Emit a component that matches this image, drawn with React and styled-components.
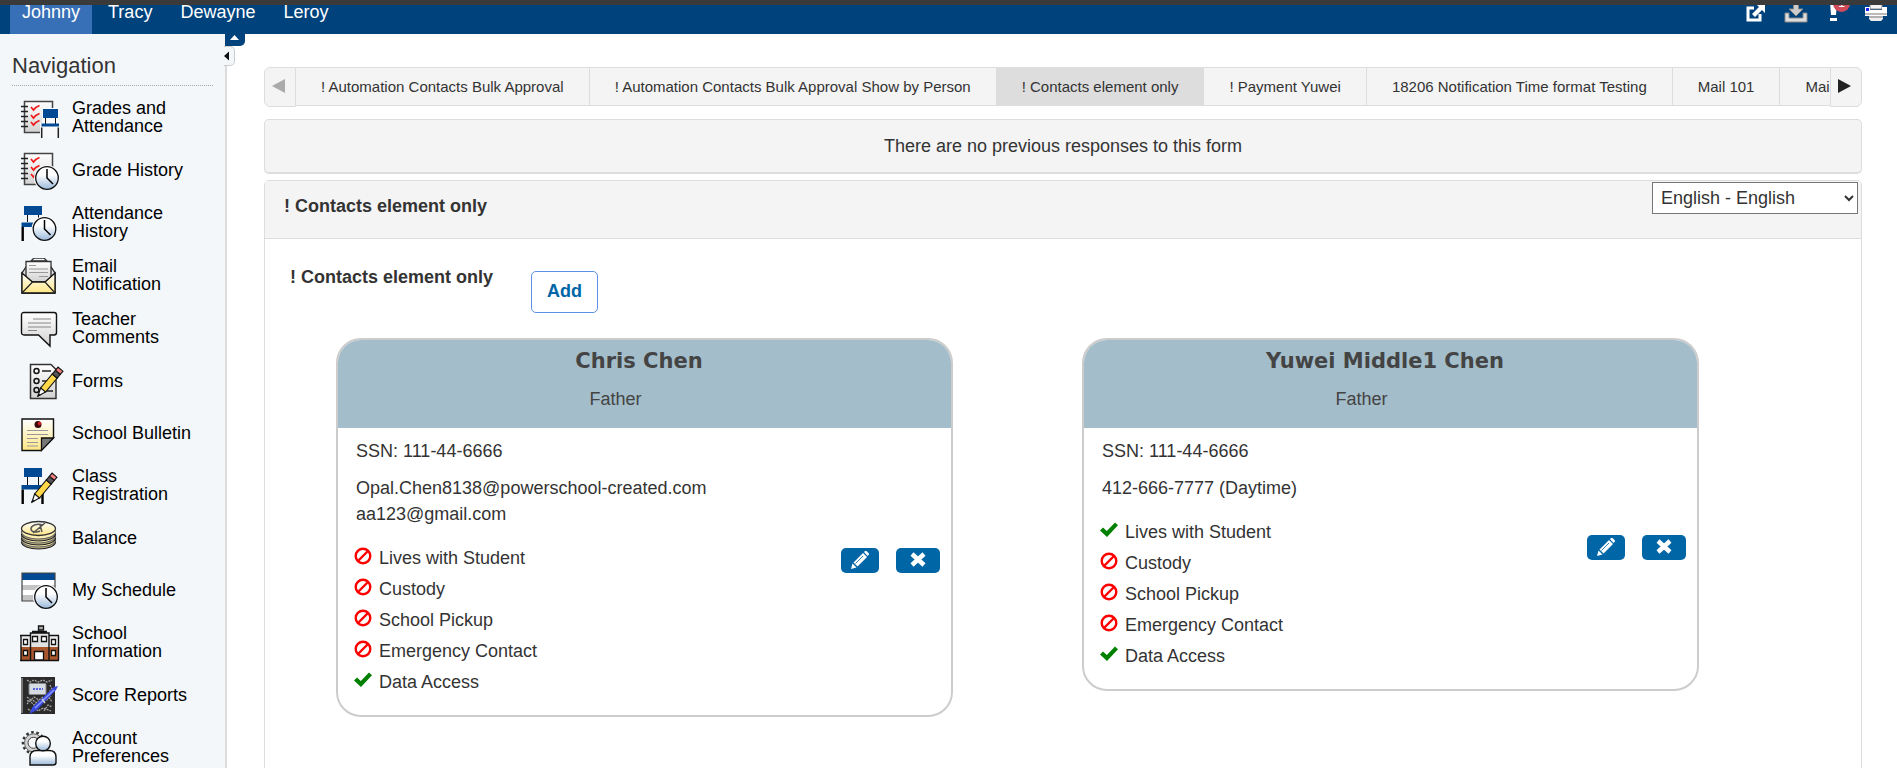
import React from "react";
import styled, { createGlobalStyle } from "styled-components";

const GlobalStyle = createGlobalStyle`
  * {
    box-sizing: border-box;
  }

  body {
    margin: 0;
    background: #fff;
    color: #333;
    font-family: "Liberation Sans", Arial, sans-serif;
    font-size: 18px;
    line-height: 20px;
  }

  button,
  select {
    font: inherit;
    cursor: pointer;
  }

  svg {
    display: block;
    flex: none;
  }
`;

const Page = styled.div`
  display: flex;
  flex-direction: column;
  height: 100vh;
  overflow: hidden;
`;

const TopBar = styled.header`
  display: flex;
  flex: none;
  justify-content: space-between;
  padding: 0 9px 0 10px;
  overflow: hidden;
  border-top: 5px solid #3a3a3a;
  background: #00427c;
`;

const StudentTabs = styled.nav`
  display: flex;
  gap: 4px;
`;

const StudentTab = styled.a`
  padding: 0 12px 15px;
  line-height: 14px;
  color: #fff;
  text-decoration: none;
  background: ${props => (props.$active ? "#3870b8" : "transparent")};
`;

const Tools = styled.div`
  display: flex;
  align-items: flex-start;
  gap: 16px;
`;

const ToolButton = styled.button`
  position: relative;
  padding: 0;
  border: 0;
  background: none;
`;

const AlertCount = styled.span`
  position: absolute;
  top: -10px;
  left: 9px;
  width: 17px;
  height: 17px;
  border-radius: 50%;
  background: #d04a58;
  color: #fff;
  font-size: 12px;
  line-height: 17px;
  text-align: center;
`;

const Columns = styled.div`
  display: flex;
  flex: 1;
  min-height: 0;
`;

const Sidebar = styled.aside`
  position: relative;
  flex: none;
  width: 227px;
  padding: 20px 12px 0;
  border-right: 2px solid #dcdcdc;
  background: #f3f7fa;
`;

const SidebarTitle = styled.h2`
  margin: 0;
  padding-bottom: 7px;
  border-bottom: 1px dotted #a5a9ac;
  font-size: 22px;
  font-weight: normal;
  line-height: 24px;
`;

const NavList = styled.ul`
  margin: 6px 0 0;
  padding: 0;
  list-style: none;
`;

const NavLink = styled.a`
  display: flex;
  align-items: center;
  gap: 8px;
  padding: 7px 10px 7px 8px;
  color: #000;
  line-height: 18px;
  text-decoration: none;
`;

const NavText = styled.span`
  padding-bottom: 3px;
`;

const HideHeader = styled.button`
  position: absolute;
  top: 0;
  left: 225px;
  width: 20px;
  height: 12px;
  padding: 0;
  border: 0;
  border-radius: 0 0 5px 0;
  background: #00427c;
`;

const HideSidebar = styled.button`
  position: absolute;
  top: 12px;
  left: 224px;
  width: 11px;
  height: 20px;
  padding: 0;
  border: 1px solid #ccc;
  border-left: 0;
  border-radius: 0 5px 5px 0;
  background: #f3f7fa;
`;

const Main = styled.main`
  display: flex;
  flex: 1;
  flex-direction: column;
  min-width: 0;
  padding: 33px 35px 0 37px;
`;

const FormTabs = styled.div`
  display: flex;
  flex: none;
  align-items: flex-start;
`;

const TabStrip = styled.nav`
  display: flex;
  flex: 1;
  min-width: 0;
  overflow: hidden;
  border: solid #ddd;
  border-width: 1px 0;
  background: #f4f4f4;
`;

const FormTab = styled.a`
  flex: none;
  padding: 0 25px;
  border-right: 1px solid #ddd;
  background: ${props => (props.$active ? "#ddd" : "#f4f4f4")};
  color: #333;
  font-size: 15px;
  line-height: 37px;
  text-decoration: none;
`;

const ScrollButton = styled.button`
  display: flex;
  flex: none;
  align-items: center;
  justify-content: center;
  width: 32px;
  height: 40px;
  padding: 0 4px 2px 0;
  border: 1px solid #ddd;
  border-radius: ${props => (props.$right ? "0 6px 6px 0" : "6px 0 0 6px")};
  background: #f4f4f4;
  color: ${props => (props.disabled ? "#aaa" : "#222")};
`;

const Notice = styled.p`
  flex: none;
  margin: 12px 0 6px;
  padding: 16px 0;
  border: 1px solid #ddd;
  border-bottom-width: 2px;
  border-radius: 5px;
  background: #f4f4f4;
  text-align: center;
`;

const Panel = styled.section`
  flex: 1;
  border: 1px solid #ddd;
  border-bottom: 0;
  border-radius: 5px 5px 0 0;
`;

const PanelHead = styled.div`
  display: flex;
  align-items: flex-start;
  justify-content: space-between;
  padding: 1px 3px 0 19px;
  border-bottom: 1px solid #ddd;
  background: #f4f4f4;
`;

const PanelTitle = styled.h1`
  margin: 0;
  padding: 14px 0 22px;
  font-size: 18px;
  line-height: 20px;
`;

const LanguageSelect = styled.select`
  width: 206px;
  height: 32px;
  padding: 0 4px;
  border: 1px solid #767676;
  border-radius: 0;
  background-color: #fff;
  color: #333;
`;

const ElementRow = styled.div`
  display: flex;
  align-items: flex-start;
  padding: 28px 25px 25px;
`;

const ElementTitle = styled.h2`
  width: 241px;
  margin: 0;
  font-size: 18px;
  line-height: 20px;
`;

const AddButton = styled.button`
  margin-top: 4px;
  padding: 9px 15px 11px;
  border: 1px solid #5c8fe6;
  border-radius: 5px;
  background: #fff;
  color: #0066a6;
  font-weight: bold;
`;

const CardGrid = styled.div`
  display: grid;
  grid-template-columns: 1fr 1fr;
  align-items: start;
  gap: 129px;
  padding: 0 162px 0 71px;
`;

const Card = styled.article`
  overflow: hidden;
  border: 2px solid #ccc;
  border-radius: 25px;
`;

const CardHead = styled.header`
  padding: 9px 0 19px;
  background: #a3bdca;
  color: #444;
  text-align: center;
`;

const ContactName = styled.h3`
  margin: 0 11px 16px 0;
  font-family: "DejaVu Sans", Verdana, sans-serif;
  font-size: 21px;
  font-weight: bold;
  line-height: 24px;
`;

const Relation = styled.div`
  margin-right: 58px;
`;

const CardBody = styled.div`
  display: flex;
  align-items: center;
  justify-content: space-between;
  padding: 10px 11px 17px 18px;
`;

const Detail = styled.div`
  margin-bottom: 11px;
  line-height: 26px;
`;

const FlagList = styled.ul`
  margin: 16px 0 0;
  padding: 0;
  list-style: none;
`;

const Flag = styled.li`
  display: flex;
  align-items: center;
  gap: 7px;
  line-height: 31px;

  svg {
    margin: 0 0 6px -2px;
  }
`;

const Actions = styled.div`
  display: flex;
  gap: 17px;
  padding-bottom: 16px;
`;

const ActionButton = styled.button`
  display: flex;
  align-items: center;
  justify-content: center;
  height: 25px;
  padding: 0 ${props => (props.$wide ? 13 : 10)}px;
  border: 0;
  border-radius: 5px;
  background: #0066a6;
`;

const Svg = ({ w = 44, h = 38, children }) => (
  <svg width={w} height={h} viewBox={`0 0 ${w} ${h}`} fill="none" aria-hidden="true">
    {children}
  </svg>
);

const Triangle = ({ direction }) => {
  const paths = {
    left: "M13 0v14L0 7z",
    right: "M0 0v14l13-7z"
  };
  return (
    <Svg w={13} h={14}>
      <path d={paths[direction]} fill="currentColor" />
    </Svg>
  );
};

// Shared gradients for the navigation icons
const GradientDefs = styled.svg`
  position: absolute;
`;

const Gradients = () => (
  <GradientDefs width="0" height="0" aria-hidden="true">
    <defs>
      <linearGradient id="steel" x1="0" y1="0" x2="0" y2="1">
        <stop offset="0.35" stopColor="#fff" />
        <stop offset="1" stopColor="#9bbadb" />
      </linearGradient>
      <linearGradient id="paper" x1="0" y1="0" x2="0" y2="1">
        <stop offset="0" stopColor="#fff" />
        <stop offset="1" stopColor="#d2d2d2" />
      </linearGradient>
      <linearGradient id="cream" x1="0" y1="0" x2="0" y2="1">
        <stop offset="0" stopColor="#fff" />
        <stop offset="1" stopColor="#ffe684" />
      </linearGradient>
    </defs>
  </GradientDefs>
);

const Clock = ({ x, y }) => (
  <g>
    <circle cx={x} cy={y} r="13" fill="#f8fafc" />
    <circle cx={x} cy={y} r="11.3" fill="url(#steel)" stroke="#111" strokeWidth="1.3" />
    <path d={`M${x} ${y - 9}V${y}l6 6`} stroke="#000" strokeWidth="1.5" />
  </g>
);

const Notebook = () => (
  <g>
    <path d="M4.5 1.5h28v31h-28z" fill="url(#paper)" stroke="#444" strokeWidth="1.5" />
    <path d="M1 6.5h7M1 11.5h7M1 16.5h7M1 21.5h7M1 26.5h7" stroke="#222" strokeWidth="1.4" />
    <path
      d="M11 7l2.5 3q2-3 6-4.5M11 15l2.5 3q2-3 6-4.5M11 22l2.5 3q2-3 6-4.5"
      stroke="#f01818"
      strokeWidth="1.7"
    />
  </g>
);

const Pencil = ({ tipX, tipY }) => (
  <g transform={`translate(${tipX} ${tipY}) rotate(40)`} stroke="#111" strokeWidth="1.1">
    <path d="M0 0l-3.2-8h6.4z" fill="#fff" />
    <path d="M-3.2-8h6.4v-18h-6.4z" fill="#ffd84a" />
    <path d="M-3.2-26h6.4v-5h-6.4z" fill="#555" />
    <path d="M-3.2-31h6.4v-4h-6.4z" fill="#f28080" />
    <path d="M-.8-1.8L0 0l.8-1.8z" fill="#000" />
  </g>
);

const GradesIcon = () => (
  <Svg>
    <Notebook />
    <path d="M22 8h17v31H20V23h2z" fill="#f7f9fb" />
    <path d="M25.5 18v6M35.5 18v6" stroke="#111" />
    <path d="M23 9h15v9H23zM21.5 23.5H39v3H21.5z" fill="#014a93" />
    <path d="M21.7 38V27.5M38.3 38V27.5" stroke="#222" strokeWidth="1.5" />
  </Svg>
);

const GradeHistoryIcon = () => (
  <Svg>
    <Notebook />
    <Clock x={27} y={26} />
  </Svg>
);

const AttendanceIcon = () => (
  <Svg>
    <path d="M7.5 9v8M18.5 9v8" stroke="#111" />
    <path d="M4 1h18v9H4zM1.5 17.5h14V22h-14z" fill="#014a93" />
    <path d="M2.7 36V22" stroke="#000" strokeWidth="2.4" />
    <Clock x={24.5} y={24} />
  </Svg>
);

const EmailIcon = () => (
  <Svg>
    <path d="M6 9L2 15v20h33V15l-4-6z" fill="#ddd" stroke="#222" strokeWidth="1.3" />
    <path d="M11 3l3-3h10l3 3z" fill="#f4f4f4" stroke="#333" strokeWidth="1.3" />
    <path d="M6 3.5h25V24H6z" fill="url(#paper)" stroke="#333" strokeWidth="1.3" />
    <path d="M9 7.5h7M9 11h19M9 14.5h19M19 18.5h9" stroke="#999" />
    <path d="M2 15l10.5 9H25l10-9v20H2z" fill="url(#cream)" stroke="#111" strokeWidth="1.3" />
    <path d="M12.5 24L2 35M25 24l10 11" stroke="#222" strokeWidth="1.2" />
  </Svg>
);

const CommentIcon = () => (
  <Svg>
    <path
      d="M4 1.5h30q2.5 0 2.5 2.5v17.5q0 2.5-2.5 2.5h-4v11L18.5 24H4q-2.5 0-2.5-2.5V4Q1.5 1.5 4 1.5z"
      fill="url(#paper)"
      stroke="#111"
      strokeWidth="1.4"
    />
    <path d="M13 8h18M8 12h23M8 16h23M8 19.5h9" stroke="#888" />
  </Svg>
);

const FormsIcon = () => (
  <Svg>
    <path d="M10.5 1.5H31l5 5v29H10.5z" fill="url(#paper)" stroke="#333" strokeWidth="1.5" />
    <circle cx="16.5" cy="8" r="2.5" stroke="#111" strokeWidth="1.5" />
    <circle cx="16.5" cy="18" r="2.5" stroke="#111" strokeWidth="1.5" />
    <circle cx="16.5" cy="27" r="2.5" stroke="#111" strokeWidth="1.5" />
    <path d="M22 8h9M22 18h9M22 28h11" stroke="#222" strokeWidth="1.5" />
    <Pencil tipX={18} tipY={33} />
  </Svg>
);

const BulletinIcon = () => (
  <Svg>
    <path d="M2 4h31.5v19L21 35.5H2z" fill="url(#cream)" stroke="#111" strokeWidth="1.4" />
    <path d="M21.5 35.5V23h12z" fill="#777" stroke="#111" strokeWidth="1.3" />
    <path d="M7 15.5h21M7 19.5h21M7 23.5h11M7 27.5h11M7 31h11" stroke="#999" />
    <circle cx="18" cy="9.5" r="3.5" fill="#3a0808" />
    <circle cx="19.5" cy="8.5" r="1.7" fill="#d82020" />
  </Svg>
);

const RegistrationIcon = () => (
  <Svg>
    <path d="M7.5 9v8M18.5 9v8" stroke="#111" />
    <path d="M4 0h18v9H4zM1.5 17H22v4.5H1.5z" fill="#014a93" />
    <path d="M2.7 36V21.5M22.5 36V21.5" stroke="#000" strokeWidth="2.4" />
    <Pencil tipX={12} tipY={34} />
  </Svg>
);

const BalanceIcon = () => (
  <Svg>
    {[22, 18, 14].map(y => (
      <g key={y} strokeWidth="1.2">
        <ellipse cx="18.5" cy={y} rx="17" ry="7" fill="#b9ad7c" stroke="#222" />
        <ellipse cx="18.5" cy={y - 2} rx="17" ry="7" fill="#fbeeb0" stroke="#666" />
      </g>
    ))}
    <ellipse cx="18.5" cy="8.5" rx="17" ry="7" fill="url(#cream)" stroke="#333" strokeWidth="1.3" />
    <path
      d="M23 5.5c-5-3-12 0-12 3.5 0 3 5 4 9 2M25 3L13 13M20 5l2 7"
      stroke="#555"
      strokeWidth="1.5"
    />
  </Svg>
);

const ScheduleIcon = () => (
  <Svg>
    <path d="M2 1h33v28H2z" fill="#fff" />
    <path d="M2 13h33v5H2zM2 23h33v6H2z" fill="#c4c4c4" />
    <path d="M2 1h33v7H2z" fill="#014a93" />
    <path d="M2 1h33v28H2z" stroke="#444" strokeWidth="1.2" />
    <Clock x={26} y={25} />
  </Svg>
);

const SchoolIcon = () => (
  <Svg>
    <path d="M18.5 8V1h5v4h-5" fill="#aaa" stroke="#111" strokeWidth="1.3" />
    <path d="M1 10.5h9.5V35H1zM29 10.5h9.5V35H29z" fill="#eee" />
    <path d="M10.5 8H29v27H10.5z" fill="#e2e2e2" />
    <path d="M1 22h37.5v13H1z" fill="#a8562c" />
    <path
      d="M1 35V10.5h9.5M0 10.5h10M29 10.5h10M38.5 10.5V35M10.5 35V8H29v27M12 6.5h15M0 35.5h39"
      stroke="#111"
      strokeWidth="1.4"
    />
    <path
      d="M3.5 14.5h4v5h-4zM31.5 14.5h4v5h-4zM3.5 25.5h4v5h-4zM31.5 25.5h4v5h-4zM12.5 11.5h5v5h-5zM21.5 11.5h5v5h-5zM14.5 26.5h9V35h-9z"
      fill="#fff"
      stroke="#111"
      strokeWidth="1.3"
    />
  </Svg>
);

const ScoreIcon = () => (
  <Svg>
    <path d="M1 0h34v37H1z" fill="#2b2b2b" />
    <path
      d="M7 3l3 2 4-2 4 2 5-2 4 2 5-2M7 20l4 3 3-3 5 3 4-3 4 3 4-4M7 27l3-3 4 4 4-4 4 3M8 32l3 2 3-4 4 4 5-3 8 3M30 8l2 4-3 3M7 24l5-1 4 2M24 34l4-6 4 2M29 20l3 5"
      stroke="#a5a5a5"
      strokeWidth="1.3"
      strokeDasharray="2 1"
    />
    <path d="M2 1v35" stroke="#777" strokeWidth="2" />
    <rect x="9" y="6.5" width="17" height="11" rx="1" fill="#d5dce2" stroke="#888" />
    <path d="M13 12h10" stroke="#5b66dd" strokeWidth="2" strokeDasharray="2 1" />
    <path d="M9.5 37l3-7L34 10l4-1-2 4-19 20z" fill="#3849e0" />
    <path d="M15 31l19-18" stroke="#8d98ff" strokeWidth="1.5" />
    <path d="M22 22l3 4" stroke="#ccc" strokeWidth="1.5" />
  </Svg>
);

const AccountIcon = () => (
  <Svg>
    <circle
      cx="13.5"
      cy="12.8"
      r="10.5"
      stroke="#333"
      strokeWidth="2.6"
      strokeDasharray="2.6 2.6"
    />
    <circle cx="13.5" cy="12.8" r="9" fill="#d2d2d2" stroke="#666" />
    <circle cx="13.5" cy="12.8" r="5.5" fill="#f3f7fa" stroke="#444" />
    <path
      d="M10 35v-8q0-6.5 7-6.5h12q7 0 7 6.5v5.5q0 2.5-3 2.5z"
      fill="url(#steel)"
      stroke="#111"
      strokeWidth="1.4"
    />
    <circle cx="23" cy="13.5" r="7.3" fill="url(#steel)" stroke="#111" strokeWidth="1.4" />
  </Svg>
);

const NoIcon = () => (
  <Svg w={18} h={18}>
    <circle cx="9" cy="9" r="7.3" stroke="red" strokeWidth="2.4" />
    <path d="M4 14L14 4" stroke="red" strokeWidth="2.4" />
  </Svg>
);

const YesIcon = () => (
  <Svg w={18} h={18}>
    <path d="M0 9.5l3-3L6.8 10 15 1.5l3 2.8L7 16z" fill="green" />
  </Svg>
);

const EditIcon = () => (
  <Svg w={18} h={18}>
    <path
      d="M0 18l1.5-5.5 4 4zM2.5 11.5L12 2l4 4-9.5 9.5zM13 1l1-1q1-.5 2 .5L17.5 2q1 1 0 2l-1 1z"
      fill="#fff"
    />
    <path d="M4.5 12.5L12 5" stroke="#0066a6" strokeWidth=".8" />
  </Svg>
);

const DeleteIcon = () => (
  <Svg w={18} h={18}>
    <path d="M3 3l12 11M15 3L3 14" stroke="#fff" strokeWidth="4.5" />
  </Svg>
);

const navItems = [
  { label: "Grades and Attendance", Icon: GradesIcon },
  { label: "Grade History", Icon: GradeHistoryIcon },
  { label: "Attendance History", Icon: AttendanceIcon },
  { label: "Email Notification", Icon: EmailIcon },
  { label: "Teacher Comments", Icon: CommentIcon },
  { label: "Forms", Icon: FormsIcon },
  { label: "School Bulletin", Icon: BulletinIcon },
  { label: "Class Registration", Icon: RegistrationIcon },
  { label: "Balance", Icon: BalanceIcon },
  { label: "My Schedule", Icon: ScheduleIcon },
  { label: "School Information", Icon: SchoolIcon },
  { label: "Score Reports", Icon: ScoreIcon },
  { label: "Account Preferences", Icon: AccountIcon }
];

const students = ["Johnny", "Tracy", "Dewayne", "Leroy"];

const forms = [
  "! Automation Contacts Bulk Approval",
  "! Automation Contacts Bulk Approval Show by Person",
  "! Contacts element only",
  "! Payment Yuwei",
  "18206 Notification Time format Testing",
  "Mail 101",
  "Mail"
];

const flagNames = [
  "Lives with Student",
  "Custody",
  "School Pickup",
  "Emergency Contact",
  "Data Access"
];

const contacts = [
  {
    name: "Chris Chen",
    relation: "Father",
    ssn: "111-44-6666",
    reach: ["Opal.Chen8138@powerschool-created.com", "aa123@gmail.com"],
    granted: ["Data Access"]
  },
  {
    name: "Yuwei Middle1 Chen",
    relation: "Father",
    ssn: "111-44-6666",
    reach: ["412-666-7777 (Daytime)"],
    granted: ["Lives with Student", "Data Access"]
  }
];

function Header() {
  return (
    <TopBar>
      <StudentTabs>
        {students.map(name => (
          <StudentTab key={name} href="#" $active={name === "Johnny"}>
            {name}
          </StudentTab>
        ))}
      </StudentTabs>
      <Tools>
        <ToolButton aria-label="Open in new window">
          <Svg w={22} h={18}>
            <path d="M8 3H2v12h12V9" stroke="#fff" strokeWidth="3" />
            <path d="M10-1h9v9l-3-3-7 7-3-3 7-7z" fill="#fff" />
          </Svg>
        </ToolButton>
        <ToolButton aria-label="Download">
          <Svg w={24} h={18}>
            <path d="M1 8h4v5h14V8h4v9H1z" fill="#ddd" stroke="#888" />
            <path d="M9.5-2h5v6H19l-7 7-7-7h4.5z" fill="#ccc" stroke="#888" />
          </Svg>
        </ToolButton>
        <ToolButton aria-label="Alerts">
          <Svg w={24} h={18}>
            <path d="M6-3h7l-1 13H7zM6 13h7v3H6z" fill="#fff" />
          </Svg>
          <AlertCount>1</AlertCount>
        </ToolButton>
        <ToolButton aria-label="Print">
          <Svg w={24} h={18}>
            <path d="M6-2h12v6H6z" fill="#f4f4f4" stroke="#888" />
            <path d="M1 2h5v3h12V2h5v9H1z" fill="#fff" />
            <path d="M1 9h22" stroke="#777" />
            <path d="M5 11h14v3l-2 2H7l-2-2z" fill="#eee" />
            <path d="M5 12h14" stroke="#777" />
            <path d="M2 3h3v3H2z" fill="#22f" />
          </Svg>
        </ToolButton>
      </Tools>
    </TopBar>
  );
}

function Navigation() {
  return (
    <Sidebar>
      <SidebarTitle>Navigation</SidebarTitle>
      <NavList>
        {navItems.map(({ label, Icon }) => (
          <li key={label}>
            <NavLink href="#">
              <Icon />
              <NavText>{label}</NavText>
            </NavLink>
          </li>
        ))}
      </NavList>
      <HideHeader aria-label="Hide header">
        <Svg w={20} h={12}>
          <path d="M5 6l4.5-5L14 6z" fill="#fff" />
        </Svg>
      </HideHeader>
      <HideSidebar aria-label="Hide navigation">
        <Svg w={10} h={18}>
          <path d="M5 4.5v9L0 9z" fill="#111" />
        </Svg>
      </HideSidebar>
    </Sidebar>
  );
}

function ContactCard({ contact }) {
  return (
    <Card>
      <CardHead>
        <ContactName>{contact.name}</ContactName>
        <Relation>{contact.relation}</Relation>
      </CardHead>
      <CardBody>
        <div>
          <Detail>SSN: {contact.ssn}</Detail>
          <Detail>
            {contact.reach.map(line => (
              <div key={line}>{line}</div>
            ))}
          </Detail>
          <FlagList>
            {flagNames.map(flag => (
              <Flag key={flag}>
                {contact.granted.includes(flag) ? <YesIcon /> : <NoIcon />}
                {flag}
              </Flag>
            ))}
          </FlagList>
        </div>
        <Actions>
          <ActionButton aria-label={`Edit ${contact.name}`}>
            <EditIcon />
          </ActionButton>
          <ActionButton $wide aria-label={`Delete ${contact.name}`}>
            <DeleteIcon />
          </ActionButton>
        </Actions>
      </CardBody>
    </Card>
  );
}

export default function App() {
  return (
    <Page>
      <GlobalStyle />
      <Gradients />
      <Header />
      <Columns>
        <Navigation />
        <Main>
          <FormTabs>
            <ScrollButton disabled aria-label="Previous forms">
              <Triangle direction="left" />
            </ScrollButton>
            <TabStrip>
              {forms.map(form => (
                <FormTab key={form} href="#" $active={form === "! Contacts element only"}>
                  {form}
                </FormTab>
              ))}
            </TabStrip>
            <ScrollButton $right aria-label="More forms">
              <Triangle direction="right" />
            </ScrollButton>
          </FormTabs>
          <Notice>There are no previous responses to this form</Notice>
          <Panel>
            <PanelHead>
              <PanelTitle>! Contacts element only</PanelTitle>
              <LanguageSelect aria-label="Language" defaultValue="en">
                <option value="en">English - English</option>
              </LanguageSelect>
            </PanelHead>
            <ElementRow>
              <ElementTitle>! Contacts element only</ElementTitle>
              <AddButton>Add</AddButton>
            </ElementRow>
            <CardGrid>
              {contacts.map(contact => (
                <ContactCard key={contact.name} contact={contact} />
              ))}
            </CardGrid>
          </Panel>
        </Main>
      </Columns>
    </Page>
  );
}
